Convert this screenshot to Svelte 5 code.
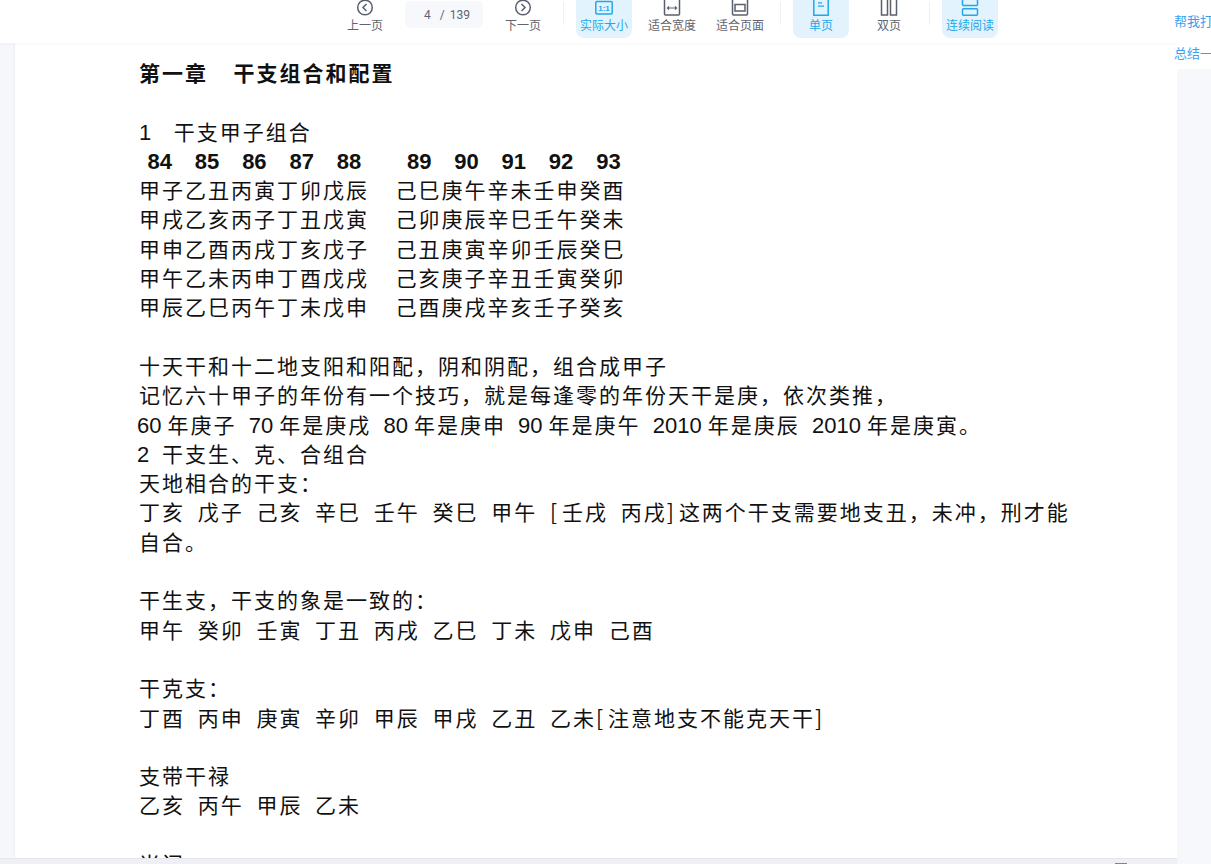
<script lang="ts">
  // blank strings are empty lines of the page
  const lines = [
    { text: '第一章  干支组合和配置', cls: 'title' },
    { text: '' },
    { text: '1  干支甲子组合', cls: 'lead' },
    { text: '84  85  86  87  88    89  90  91  92  93', cls: 'nums' },
    { text: '甲子乙丑丙寅丁卯戊辰  己巳庚午辛未壬申癸酉', cls: 'pair' },
    { text: '甲戌乙亥丙子丁丑戊寅  己卯庚辰辛巳壬午癸未', cls: 'pair' },
    { text: '甲申乙酉丙戌丁亥戊子  己丑庚寅辛卯壬辰癸巳', cls: 'pair' },
    { text: '甲午乙未丙申丁酉戊戌  己亥庚子辛丑壬寅癸卯', cls: 'pair' },
    { text: '甲辰乙巳丙午丁未戊申  己酉庚戌辛亥壬子癸亥', cls: 'pair' },
    { text: '' },
    { text: '十天干和十二地支阳和阳配，阴和阴配，组合成甲子' },
    { text: '记忆六十甲子的年份有一个技巧，就是每逢零的年份天干是庚，依次类推，' },
    { text: '60年庚子 70年是庚戌 80年是庚申 90年是庚午 2010年是庚辰 2010年是庚寅。', cls: 'years' },
    { text: '2 干支生、克、合组合', cls: 'out' },
    { text: '天地相合的干支：' },
    { text: '丁亥 戊子 己亥 辛巳 壬午 癸巳 甲午 [壬戌 丙戌]这两个干支需要地支丑，未冲，刑才能' },
    { text: '自合。' },
    { text: '' },
    { text: '干生支，干支的象是一致的：' },
    { text: '甲午 癸卯 壬寅 丁丑 丙戌 乙巳 丁未 戊申 己酉' },
    { text: '' },
    { text: '干克支：' },
    { text: '丁酉 丙申 庚寅 辛卯 甲辰 甲戌 乙丑 乙未[注意地支不能克天干]' },
    { text: '' },
    { text: '支带干禄' },
    { text: '乙亥 丙午 甲辰 乙未' },
    { text: '' },
    { text: '当问' }
  ];

  // digits and brackets are set tighter/wider than the han text
  const parts = (text: string) => text.split(/(\d+|[\[\]])/).filter(Boolean);
  const partClass = (p: string) => (/\d/.test(p) ? 'dig' : /[\[\]]/.test(p) ? 'br' : '');
</script>

<div class="shell">
  <div class="reader">
    <header class="toolbar">
      <button class="tool">
        <svg viewBox="0 0 18 16" class="icon"><circle cx="9" cy="7.500" r="7.300" /><path d="M10.500 4 7 7.500l3.500 3.500" /></svg>
        <span>上一页</span>
      </button>
      <div class="pager"><span class="cur">4</span><span class="total">/ 139</span></div>
      <button class="tool">
        <svg viewBox="0 0 18 16" class="icon"><circle cx="9" cy="7.500" r="7.300" /><path d="M7.500 4 11 7.500 7.500 11" /></svg>
        <span>下一页</span>
      </button>
      <i class="sep"></i>
      <button class="tool on">
        <svg viewBox="0 0 18 16" class="icon"><rect x="0.800" y="1.500" width="16.400" height="12.500" rx="1" /><text x="9" y="10.800" class="ratio">1:1</text></svg>
        <span>实际大小</span>
      </button>
      <button class="tool">
        <svg viewBox="0 0 18 16" class="icon"><path d="M1.500 -2v16a1 1 0 0 0 1 1h13a1 1 0 0 0 1-1V-2" /><path class="thin" d="M4.500 8h9M6 6.400 4.400 8 6 9.600M12 6.400 13.600 8 12 9.600" /></svg>
        <span>适合宽度</span>
      </button>
      <button class="tool">
        <svg viewBox="0 0 18 16" class="icon"><path d="M1.500 -2v16a1 1 0 0 0 1 1h13a1 1 0 0 0 1-1V-2" /><rect x="4" y="4.500" width="10" height="6.500" /></svg>
        <span>适合页面</span>
      </button>
      <i class="sep"></i>
      <button class="tool on">
        <svg viewBox="0 0 18 16" class="icon"><path d="M1.800 -2v17.200h14.400V-2" /><path class="thin" d="M6 2.800h4M6 6.200h6" /></svg>
        <span>单页</span>
      </button>
      <button class="tool">
        <svg viewBox="0 0 18 16" class="icon"><path d="M1.500 -2v17h6V-2M10.500 -2v17h6V-2" /></svg>
        <span>双页</span>
      </button>
      <i class="sep"></i>
      <button class="tool on">
        <svg viewBox="0 0 18 16" class="icon"><path d="M1.500 -2v6.500a1 1 0 0 0 1 1h13a1 1 0 0 0 1-1V-2" /><rect x="1.500" y="8.800" width="15" height="6.400" rx="1" /></svg>
        <span>连续阅读</span>
      </button>
    </header>

    <main class="viewer">
      <article class="page">
        {#each lines as line}
          <div class="line {line.cls ?? ''}">{#each parts(line.text) as p}<span class={partClass(p)}>{p}</span>{/each}</div>
        {/each}
      </article>
    </main>
    <footer class="status"><i class="thumb"></i></footer>
  </div>

  <aside class="side">
    <div class="hints">
      <p>帮我打</p>
      <p>总结一</p>
    </div>
  </aside>
</div>

<style>
  :global(body) {
    margin: 0;
    background: #f6f7fb;
  }

  .shell {
    display: flex;
    width: 1211px;
    height: 864px;
    overflow: hidden;
    font-family: "Noto Sans CJK SC", "Liberation Sans", sans-serif;
  }

  .reader {
    width: 1177px;
    flex-shrink: 0;
    display: flex;
    flex-direction: column;
    height: 864px;
  }

  .toolbar {
    height: 43px;
    flex-shrink: 0;
    box-sizing: border-box;
    padding-left: 337px;
    display: flex;
    align-items: flex-start;
    gap: 12px;
    background: #fff;
    position: relative;
    box-shadow: 0 1px 3px rgba(40, 50, 80, 0.04);
  }

  .tool {
    width: 56px;
    height: 38px;
    flex-shrink: 0;
    border: none;
    background: none;
    padding: 0;
    border-radius: 0 0 8px 8px;
    display: flex;
    flex-direction: column;
    align-items: center;
    color: #5f6470;
    font-family: inherit;
    font-size: 12px;
    line-height: 17px;
    cursor: pointer;
  }

  .tool.on {
    background: #e3f3fd;
    color: #1fa8ec;
  }

  .tool span {
    white-space: nowrap;
  }

  .icon {
    width: 18px;
    height: 16px;
    flex-shrink: 0;
    fill: none;
    stroke: #5a5f6e;
    stroke-width: 1.5;
  }

  .tool.on .icon {
    stroke: #1fa8ec;
  }

  .icon .thin {
    stroke-width: 1.2;
  }

  .ratio {
    font-family: "Liberation Sans", sans-serif;
    font-size: 8px;
    font-weight: 700;
    text-anchor: middle;
    fill: #1fa8ec;
    stroke: none;
  }

  .pager {
    width: 78px;
    height: 27px;
    margin-top: 1px;
    flex-shrink: 0;
    box-sizing: border-box;
    padding-left: 19px;
    display: flex;
    align-items: center;
    gap: 9px;
    background: #f7f8fb;
    border-radius: 5px;
    font-family: "Roboto", "Liberation Sans", sans-serif;
    font-size: 12px;
    word-spacing: 2px;
    color: #5f6470;
  }

  .sep {
    width: 1px;
    height: 23px;
    margin-top: 2px;
    flex-shrink: 0;
    background: #eff0f3;
  }

  .viewer {
    flex: 1;
    min-height: 0;
    overflow: hidden;
    padding-left: 15px;
  }

  .page {
    height: 100%;
    box-sizing: border-box;
    padding: 15px 0 0 124px;
    background: #fff;
    box-shadow: 0 0 2px #dfe1e8;
    overflow: hidden;
  }

  .line {
    height: 29.3px;
    line-height: 29.3px;
    white-space: pre;
    font-size: 21px;
    letter-spacing: 2px;
    word-spacing: 6px;
    color: #111;
  }

  .dig {
    font-family: "Liberation Sans", sans-serif;
    font-size: 22px;
    letter-spacing: 0;
  }

  .br {
    letter-spacing: 5px;
  }

  .title {
    font-weight: 700;
  }

  .lead {
    word-spacing: 4.5px;
  }

  .pair {
    word-spacing: 6.5px;
  }

  .years {
    margin-left: -2px;
    word-spacing: 5.5px;
  }

  .years .dig {
    margin-right: 6px;
  }

  .out {
    margin-left: -2px;
  }

  .nums {
    font-family: "Liberation Sans", sans-serif;
    font-weight: 700;
    font-size: 22px;
    line-height: 31.3px;
    letter-spacing: 0;
    word-spacing: 5.3px;
    text-indent: 8.5px;
  }

  .status {
    height: 6px;
    flex-shrink: 0;
    position: relative;
    background: #eef0f5;
    border-top: 1px solid #e4e6ec;
    box-sizing: border-box;
  }

  .thumb {
    position: absolute;
    left: 1115px;
    bottom: 0;
    width: 12px;
    height: 1px;
    background: #80848f;
  }

  .side {
    flex: 1;
    min-width: 0;
    position: relative;
    background: #f7f8fb;
  }

  .hints {
    height: 69px;
    box-sizing: border-box;
    padding-top: 11px;
    background: #fff;
  }

  .hints p {
    margin: 0 0 12px -3px;
    font-size: 13px;
    line-height: 20px;
    white-space: nowrap;
    color: #3b9fee;
  }
</style>
